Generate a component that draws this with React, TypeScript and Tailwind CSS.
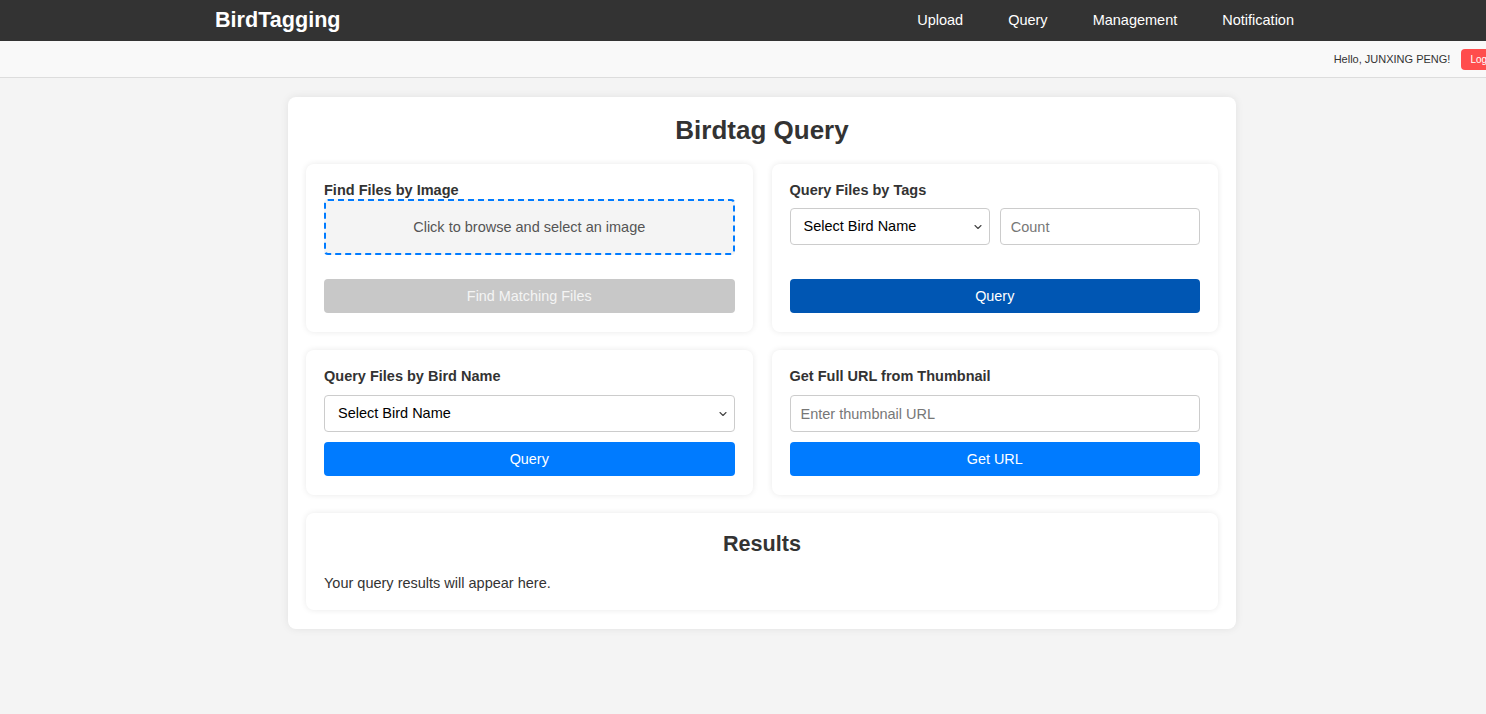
import React, { useState } from 'react';

const font = { fontFamily: '"Liberation Sans", Arial, sans-serif' };

function BirdSelect() {
  return (
    <div className="relative h-[37px] w-full">
      <select className="h-full w-full appearance-none rounded-[4px] border border-[#ccc] bg-white pl-[13px] pr-[20px] text-[14.5px] text-black">
        <option>Select Bird Name</option>
      </select>
      <svg
        className="pointer-events-none absolute right-[8px] top-1/2 -translate-y-1/2"
        width="8"
        height="5"
        viewBox="0 0 8 5"
        fill="none"
      >
        <path d="M1 1l3 3 3-3" stroke="#444" strokeWidth="1.1" strokeLinecap="round" strokeLinejoin="round" />
      </svg>
    </div>
  );
}

export default function App() {
  const [count, setCount] = useState('');
  const [thumb, setThumb] = useState('');

  return (
    <div style={font} className="min-h-screen overflow-hidden bg-[#f4f4f4] text-[#333]">
      <div className="w-[1524px]">
        <nav className="flex h-[41px] items-center bg-[#333] pl-[215px] pr-[230px] text-white">
          <span className="text-[21.6px] font-bold">BirdTagging</span>
          <div className="ml-auto flex gap-[45px] text-[14.5px]">
            <a>Upload</a>
            <a>Query</a>
            <a>Management</a>
            <a>Notification</a>
          </div>
        </nav>

        <div className="flex h-[37px] items-center justify-end border-b border-[#ddd] bg-[#f9f9f9] pr-[14px]">
          <span className="text-[11px] text-[#333]">Hello, JUNXING PENG!</span>
          <button className="ml-[11px] h-[21px] rounded-[4px] bg-[#ff4d4d] px-[9px] text-[10px] text-white">Logout</button>
        </div>

        <main className="pt-[19px] pb-10">
          <div className="mx-auto w-[948px] rounded-lg bg-white px-[18px] pt-[18px] pb-[19px] shadow-[0_0_8px_rgba(0,0,0,0.08)]">
            <h1 className="mb-[19px] text-center text-[26px] font-bold leading-[30px]">Birdtag Query</h1>

            <div className="grid grid-cols-2 gap-x-[19px] gap-y-[18px]">
              <section className="flex flex-col rounded-lg bg-white px-[18px] pt-[18px] pb-[19px] shadow-[0_0_6px_rgba(0,0,0,0.09)]">
                <h3 className="text-[14.5px] font-bold leading-[17px]">Find Files by Image</h3>
                <label className="flex h-[56px] cursor-pointer items-center justify-center rounded-[4px] border-2 border-dashed border-[#007bff] bg-[#f4f4f4] pt-[2px] text-[14.5px] text-[#555]">
                  Click to browse and select an image
                </label>
                <button disabled className="mt-[24px] h-[34px] rounded-[4px] bg-[#c8c8c8] pt-[1px] text-[14.4px] text-[#f4f4f4]">
                  Find Matching Files
                </button>
              </section>

              <section className="flex flex-col rounded-lg bg-white px-[18px] pt-[18px] pb-[19px] shadow-[0_0_6px_rgba(0,0,0,0.09)]">
                <h3 className="mb-[9px] text-[14.5px] font-bold leading-[17px]">Query Files by Tags</h3>
                <div className="grid grid-cols-2 gap-[10px]">
                  <BirdSelect />
                  <input
                    value={count}
                    onChange={(e) => setCount(e.target.value)}
                    placeholder="Count"
                    className="h-[37px] w-full rounded-[4px] border border-[#ccc] px-[10px] text-[14.5px] placeholder:text-[#777]"
                  />
                </div>
                <button className="mt-auto h-[34px] rounded-[4px] bg-[#0056b3] pt-[1px] text-[14.4px] text-white">Query</button>
              </section>

              <section className="flex flex-col rounded-lg bg-white px-[18px] pt-[18px] pb-[19px] shadow-[0_0_6px_rgba(0,0,0,0.09)]">
                <h3 className="mb-[10px] text-[14.5px] font-bold leading-[17px]">Query Files by Bird Name</h3>
                <BirdSelect />
                <button className="mt-[10px] h-[34px] rounded-[4px] bg-[#007bff] pt-[1px] text-[14.4px] text-white">Query</button>
              </section>

              <section className="flex flex-col rounded-lg bg-white px-[18px] pt-[18px] pb-[19px] shadow-[0_0_6px_rgba(0,0,0,0.09)]">
                <h3 className="mb-[10px] text-[14.5px] font-bold leading-[17px]">Get Full URL from Thumbnail</h3>
                <input
                  value={thumb}
                  onChange={(e) => setThumb(e.target.value)}
                  placeholder="Enter thumbnail URL"
                  className="h-[37px] rounded-[4px] border border-[#ccc] px-[10px] text-[14.5px] placeholder:text-[#777]"
                />
                <button className="mt-[10px] h-[34px] rounded-[4px] bg-[#007bff] pt-[1px] text-[14.4px] text-white">Get URL</button>
              </section>

              <section className="col-span-2 rounded-lg bg-white px-[18px] pt-[18px] pb-[18px] shadow-[0_0_6px_rgba(0,0,0,0.09)]">
                <h2 className="text-center text-[21.6px] font-bold leading-[26px]">Results</h2>
                <p className="mt-[17px] text-[14.5px] leading-[18px]">Your query results will appear here.</p>
              </section>
            </div>
          </div>
        </main>
      </div>
    </div>
  );
}
